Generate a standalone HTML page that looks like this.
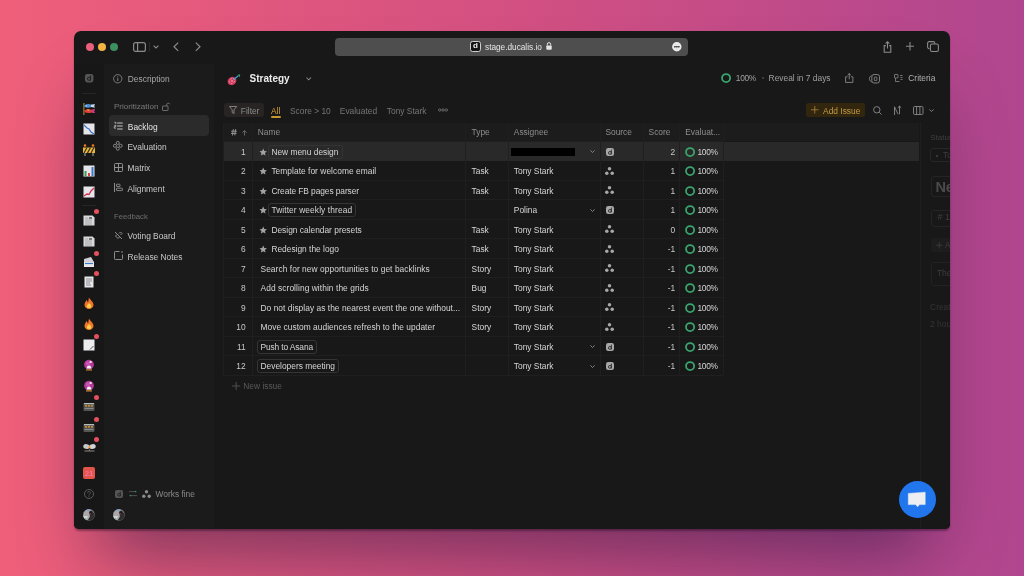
<!DOCTYPE html>
<html><head><meta charset="utf-8">
<style>
*{margin:0;padding:0;box-sizing:border-box}
html,body{width:1024px;height:576px;overflow:hidden}
body{position:relative;background:linear-gradient(90deg,#ef5f7a 0%,#d35082 50%,#b0468f 100%);font-family:"Liberation Sans",sans-serif;color:#d8d8d8}
.win{position:absolute;left:74px;top:31px;width:876px;height:498.4px;background:#181818;border-radius:7px 7px 5px 5px;overflow:hidden;box-shadow:0 2px 2px rgba(10,0,20,.35),0 48px 70px -22px rgba(0,10,50,.45)}
.a{position:absolute}
.t{position:absolute;font-size:8.4px;line-height:12px;white-space:nowrap}
.win{will-change:transform}
svg{position:absolute;overflow:visible}
.rail{position:absolute;left:0;top:33px;width:30px;height:465px;background:#171717}
.side{position:absolute;left:30px;top:33px;width:110px;height:465px;background:#1b1b1b}
.rpanel{position:absolute;left:846px;top:91px;width:30px;height:407px;background:#181818;border-left:1px solid #1f1f1f}
.dot{position:absolute;left:20.4px;width:5px;height:5px;border-radius:50%;background:#e4505c}
</style></head><body>

<div class="win">
  <!-- title bar -->
  <div class="a" style="left:11.7px;top:11.9px;width:8px;height:8px;border-radius:50%;background:#ec5f7a"></div>
  <div class="a" style="left:23.8px;top:11.9px;width:8px;height:8px;border-radius:50%;background:#f2b544"></div>
  <div class="a" style="left:36px;top:11.9px;width:8px;height:8px;border-radius:50%;background:#3e8f60"></div>
  <svg style="left:59px;top:11px" width="13" height="10" viewBox="0 0 13 10"><rect x=".6" y=".6" width="11.8" height="8.8" rx="2" fill="none" stroke="#8a8a8a" stroke-width="1.2"/><line x1="4.6" y1="1" x2="4.6" y2="9" stroke="#8a8a8a" stroke-width="1.2"/></svg>
  <div class="a" style="left:75px;top:11px;width:1px;height:10px;background:#2a2a2a"></div>
  <svg style="left:78.8px;top:14.3px" width="6" height="3.5" viewBox="0 0 6 3.5"><path d="M.6 .6 3 2.9 5.4 .6" fill="none" stroke="#8a8a8a" stroke-width="1.1"/></svg>
  <svg style="left:99px;top:10.7px" width="6" height="9.5" viewBox="0 0 6 9.5"><path d="M5.2 .6 1 4.75 5.2 8.9" fill="none" stroke="#8a8a8a" stroke-width="1.2"/></svg>
  <svg style="left:121px;top:10.7px" width="6" height="9.5" viewBox="0 0 6 9.5"><path d="M.8 .6 5 4.75 .8 8.9" fill="none" stroke="#8a8a8a" stroke-width="1.2"/></svg>
  <div class="a" style="left:260.5px;top:7px;width:353.5px;height:17.5px;border-radius:4px;background:#4e4e4e"></div>
  <div class="a" style="left:396px;top:10px;width:11px;height:11px;border-radius:2.5px;background:#151515;border:1px solid #d0d0d0"></div>
  <div class="t" style="left:399px;top:9px;color:#eee;font-weight:700;font-size:8px">d</div>
  <div class="t" style="left:411px;top:10.7px;color:#e6e6e6;font-size:8.25px">stage.ducalis.io</div>
  <svg style="left:472px;top:11px" width="6" height="8" viewBox="0 0 6 8"><path d="M1.3 3.5V2.3a1.7 1.7 0 0 1 3.4 0v1.2" fill="none" stroke="#e6e6e6" stroke-width="1"/><rect x=".3" y="3.4" width="5.4" height="4.4" rx=".8" fill="#e6e6e6"/></svg>
  <svg style="left:598.2px;top:10.7px" width="9.6" height="9.6" viewBox="0 0 10 10"><circle cx="5" cy="5" r="4.9" fill="#ececec"/><path d="M2 5h6" stroke="#555" stroke-width="1.1"/><circle cx="3" cy="5" r=".8" fill="#444"/><circle cx="5" cy="5" r=".8" fill="#444"/><circle cx="7" cy="5" r=".8" fill="#444"/><path d="M3.5 2.8h.5M5.7 2.8h.5M4.5 7.2l1 .6" stroke="#aaa" stroke-width=".6"/></svg>
  <svg style="left:809px;top:9.5px" width="9" height="12" viewBox="0 0 9 12"><path d="M2.8 4.6H1.2v6.6h6.6V4.6H6.2M4.5 7.5V.8M2.6 2.6 4.5.7l1.9 1.9" fill="none" stroke="#8a8a8a" stroke-width="1.1"/></svg>
  <svg style="left:832px;top:11.3px" width="8" height="8.5" viewBox="0 0 8 8.5"><path d="M4 0v8.5M0 4.25h8" fill="none" stroke="#8a8a8a" stroke-width="1.1"/></svg>
  <svg style="left:853px;top:10px" width="12" height="11" viewBox="0 0 12 11"><rect x="3.4" y="3" width="8" height="7.5" rx="1.6" fill="none" stroke="#8a8a8a" stroke-width="1.1"/><path d="M2.5 7.6H2.3A1.6 1.6 0 0 1 .6 6V2.2A1.6 1.6 0 0 1 2.2.6h4A1.6 1.6 0 0 1 7.8 2.2v.6" fill="none" stroke="#8a8a8a" stroke-width="1.1"/></svg>


  <div class="rail">
    <svg style="left:10.9px;top:9.9px" width="8.4" height="8.4" viewBox="0 0 8 8"><rect width="8" height="8" rx="2.2" fill="#565656"/><path d="M5.3 1.5v4.9M5.3 4.6A1.45 1.45 0 1 1 5.2 4" fill="none" stroke="#222" stroke-width="1"/></svg>
    <div class="a" style="left:8px;top:29px;width:14px;height:1px;background:#262626"></div>
    <!-- 1 carp flag -->
    <svg style="left:9px;top:38.5px" width="12.5" height="12" viewBox="0 0 12.5 12"><rect x="0.4" y="0" width="1" height="12" fill="#b8943a"/><path d="M1.4 2.2Q5 .2 8.5 1.8L12 1.2 11 3 12 4.6 8.5 4Q5 5.6 1.4 3.8z" fill="#4a90d8"/><path d="M8 1.8 12 1.2 11 3 12 4.6 8 4z" fill="#d8d8dc"/><circle cx="3.2" cy="2.9" r=".6" fill="#fff"/><path d="M1.4 7.4Q5 5.2 8.5 6.8L12 6.2 11 8.2 12 10 8.5 9.4Q5 11 1.4 9z" fill="#e0403a"/><path d="M3 6.8Q5 6 6.5 6.6L6 8z" fill="#f0a030"/><path d="M8.4 6.8 12 6.2 11 8.2 12 10 8.4 9.4z" fill="#c8388a"/></svg>
    <!-- 2 chart down -->
    <svg style="left:9px;top:59px" width="12" height="12" viewBox="0 0 12 12"><rect x="0.5" y="0.5" width="11" height="11" fill="#e6e6ea"/><path d="M1 2 4 5 6 6 8 9 11 11" fill="none" stroke="#3b78c8" stroke-width="1.3"/></svg>
    <!-- 3 construction -->
    <svg style="left:9px;top:80px" width="12" height="12" viewBox="0 0 12 12"><circle cx="2" cy="1.5" r="1.3" fill="#f07a20"/><circle cx="10" cy="1.5" r="1.3" fill="#f07a20"/><rect x="0" y="3.5" width="12" height="5.5" fill="#f0b830"/><path d="M1 9 4 3.5M4.5 9 7.5 3.5M8 9 11 3.5" stroke="#333" stroke-width="1.3"/><rect x="1.5" y="9" width="1" height="3" fill="#aaa"/><rect x="9.5" y="9" width="1" height="3" fill="#aaa"/></svg>
    <!-- 4 bar chart -->
    <svg style="left:9px;top:101px" width="12" height="12" viewBox="0 0 12 12"><rect x="0.5" y="0.5" width="11" height="11" fill="#e6e6ea"/><rect x="1.5" y="6" width="2" height="5" fill="#3aa050"/><rect x="5" y="8" width="2" height="3" fill="#d84040"/><rect x="8.5" y="2" width="2" height="9" fill="#3b78c8"/></svg>
    <!-- 5 chart up -->
    <svg style="left:9px;top:122px" width="12" height="12" viewBox="0 0 12 12"><rect x="0.5" y="0.5" width="11" height="11" fill="#e6e6ea"/><path d="M1 10 4 8 6 8.5 8 5 11 2" fill="none" stroke="#d03048" stroke-width="1.3"/></svg>
    <div class="a" style="left:8px;top:141px;width:14px;height:1px;background:#262626"></div>
    <!-- 6 newspaper -->
    <div class="dot" style="top:145px"></div>
    <svg style="left:9px;top:150px" width="12" height="12" viewBox="0 0 12 12"><path d="M.5 1.5h9l2 2v8h-11z" fill="#d9d9dc"/><path d="M2 4h3M2 6h7M2 8h7M2 10h7" stroke="#999" stroke-width=".8"/><rect x="6" y="3" width="3" height="2" fill="#777"/></svg>
    <svg style="left:9px;top:171px" width="12" height="12" viewBox="0 0 12 12"><path d="M.5 1.5h9l2 2v8h-11z" fill="#d9d9dc"/><path d="M2 4h3M2 6h7M2 8h7M2 10h7" stroke="#999" stroke-width=".8"/><rect x="6" y="3" width="3" height="2" fill="#777"/></svg>
    <!-- 8 envelope -->
    <div class="dot" style="top:186.5px"></div>
    <svg style="left:9px;top:192px" width="12" height="12" viewBox="0 0 12 12"><path d="M1 3 8 1l3 5v5H1z" fill="#d0d0d4"/><path d="M1 6h10v5H1z" fill="#e8e8ec"/><path d="M2 7.5h8" stroke="#3b78c8" stroke-width="1.2"/></svg>
    <!-- 9 receipt -->
    <div class="dot" style="top:206.5px"></div>
    <svg style="left:10px;top:212px" width="10" height="12" viewBox="0 0 10 12"><rect x=".5" y=".5" width="9" height="11" fill="#e6e6ea"/><path d="M2 3h6M2 5h6M2 7h4M2 9h5" stroke="#777" stroke-width=".8"/></svg>
    <!-- 10 fire -->
    <svg style="left:9px;top:233px" width="12" height="12" viewBox="0 0 12 12"><path d="M6 .5C7 3 10.5 4.5 10.5 8A4.5 4 0 0 1 1.5 8C1.5 5.5 3 4.5 3.5 3 4.5 4 4.5 5 5 5.5 5.5 4 5.5 2 6 .5z" fill="#f2762a"/><path d="M6 6c.8 1 2.2 1.6 2.2 3.2A2.2 2 0 0 1 3.8 9.2C3.8 7.8 5.5 7 6 6z" fill="#fbd04a"/></svg>
    <svg style="left:9px;top:254px" width="12" height="12" viewBox="0 0 12 12"><path d="M6 .5C7 3 10.5 4.5 10.5 8A4.5 4 0 0 1 1.5 8C1.5 5.5 3 4.5 3.5 3 4.5 4 4.5 5 5 5.5 5.5 4 5.5 2 6 .5z" fill="#f2762a"/><path d="M6 6c.8 1 2.2 1.6 2.2 3.2A2.2 2 0 0 1 3.8 9.2C3.8 7.8 5.5 7 6 6z" fill="#fbd04a"/></svg>
    <!-- 12 memo -->
    <div class="dot" style="top:269.5px"></div>
    <svg style="left:9px;top:274.5px" width="12" height="12" viewBox="0 0 12 12"><rect x=".5" y=".5" width="11" height="11" fill="#ececef"/><path d="M7 10.5 10.5 7" stroke="#555" stroke-width="1"/></svg>
    <!-- 13,14 crystal ball -->
    <svg style="left:9px;top:295px" width="12" height="12" viewBox="0 0 12 12"><circle cx="6" cy="5.6" r="4.9" fill="#b33a9c"/><circle cx="4.8" cy="4.5" r="2" fill="#cc55b0"/><rect x="6.6" y="2" width="2" height="2" fill="#f0e0f0"/><path d="M3.6 9.4Q3.8 6.4 6 6.4T8.4 9.4z" fill="#f4f0f4"/><rect x="3" y="10.3" width="6" height="1.2" fill="#d08a30"/></svg>
    <svg style="left:9px;top:316px" width="12" height="12" viewBox="0 0 12 12"><circle cx="6" cy="5.6" r="4.9" fill="#b33a9c"/><circle cx="4.8" cy="4.5" r="2" fill="#cc55b0"/><rect x="6.6" y="2" width="2" height="2" fill="#f0e0f0"/><path d="M3.6 9.4Q3.8 6.4 6 6.4T8.4 9.4z" fill="#f4f0f4"/><rect x="3" y="10.3" width="6" height="1.2" fill="#d08a30"/></svg>
    <!-- 15,16 keyboard -->
    <div class="dot" style="top:331px"></div>
    <svg style="left:9px;top:337.5px" width="12" height="10" viewBox="0 0 12 10"><rect x=".5" y="1" width="11" height="8" rx="1" fill="#555"/><rect x="1" y="1" width="10" height="1.2" fill="#bbb"/><path d="M2 3.8h2M5 3.8h2M8 3.8h2" stroke="#e8a020" stroke-width="1.2"/><path d="M1.5 6.5h9" stroke="#888" stroke-width="1"/></svg>
    <div class="dot" style="top:352.5px"></div>
    <svg style="left:9px;top:359px" width="12" height="10" viewBox="0 0 12 10"><rect x=".5" y="1" width="11" height="8" rx="1" fill="#555"/><rect x="1" y="1" width="10" height="1.2" fill="#bbb"/><path d="M2 3.8h2M5 3.8h2M8 3.8h2" stroke="#e8a020" stroke-width="1.2"/><path d="M1.5 6.5h9" stroke="#888" stroke-width="1"/></svg>
    <!-- 17 wings -->
    <div class="dot" style="top:372.5px"></div>
    <svg style="left:8.5px;top:378px" width="13" height="10" viewBox="0 0 13 10"><ellipse cx="3.5" cy="4.5" rx="3.3" ry="2.4" transform="rotate(15 3.5 4.5)" fill="#c8c8cc"/><ellipse cx="9.5" cy="4.5" rx="3.3" ry="2.4" transform="rotate(-15 9.5 4.5)" fill="#d4d4d8"/><circle cx="6.5" cy="5.2" r="1.1" fill="#e8a020"/><path d="M1.5 9h10" stroke="#8a8a8a" stroke-width="1"/><circle cx="6.5" cy="8" r=".7" fill="#c89020"/></svg>
    <!-- calendar -->
    <div class="a" style="left:9px;top:403px;width:12px;height:12px;border-radius:2px;background:#e3554a"></div>
    <div class="t" style="left:9px;width:12px;text-align:center;top:403.5px;font-size:8px;color:#f3709a;font-weight:700;letter-spacing:-.1px">21</div>
    <!-- help -->
    <svg style="left:10px;top:425px" width="10" height="10" viewBox="0 0 10 10"><circle cx="5" cy="5" r="4.5" fill="none" stroke="#5a5a5a" stroke-width="1"/><path d="M3.6 3.9a1.4 1.4 0 1 1 2 1.3c-.4.2-.6.5-.6.9v.3" fill="none" stroke="#5a5a5a" stroke-width=".9"/><circle cx="5" cy="7.5" r=".5" fill="#5a5a5a"/></svg>
    <!-- avatar -->
    <svg style="left:9.1px;top:445.1px" width="11.8" height="11.8" viewBox="0 0 12 12"><clipPath id="c1"><circle cx="6" cy="6" r="5.9"/></clipPath><g clip-path="url(#c1)"><rect width="12" height="12" fill="#a8a8a8"/><path d="M0 6.5Q3 8 5.5 7L2 12H0z" fill="#d8d8d8"/><path d="M6.5 2 9 1.5 12 5v7H4.5L7 8z" fill="#2e2e2e"/><path d="M6.3 3.2 8.6 2.6 9 4.5 6.8 5.3z" fill="#111"/><circle cx="7.3" cy="4.6" r=".8" fill="#b03070"/><ellipse cx="5.3" cy=".9" rx="1.2" ry=".8" fill="#5aa0e8"/><circle cx="2.3" cy="9.8" r=".7" fill="#2fa060"/></g></svg>
  </div>

  <div class="side">
    <svg style="left:9.3px;top:9.5px" width="9.5" height="9.5" viewBox="0 0 10 10"><circle cx="5" cy="5" r="4.4" fill="none" stroke="#7c7c7c" stroke-width="1"/><path d="M5 4.3v3" stroke="#8a8a8a" stroke-width="1"/><circle cx="5" cy="2.9" r=".6" fill="#8a8a8a"/></svg>
    <div class="t" style="left:23.8px;top:9.30px;color:#a6a6a6;">Description</div>
    <div class="t" style="left:9.9px;top:36.80px;color:#7a7a7a;font-size:8.1px">Prioritization</div>
    <svg style="left:58px;top:38.3px" width="8" height="9" viewBox="0 0 8 9"><rect x=".5" y="4" width="5.5" height="4.5" rx=".6" fill="none" stroke="#777" stroke-width=".9"/><path d="M4.8 4V2.2a1.6 1.6 0 0 1 3 0" fill="none" stroke="#777" stroke-width=".9"/></svg>
    <div class="a" style="left:5.3px;top:51.2px;width:99.5px;height:20.4px;border-radius:4px;background:#2b2b2b"></div>
    <svg style="left:9.9px;top:57.5px" width="9" height="8" viewBox="0 0 9 8"><path d="M3.2 1h5.5M3.2 4h5.5M3.2 7h5.5" stroke="#c8c8c8" stroke-width="1"/><path d="M.4 .3h1.4v1.6M.3 3.3h1.5v1.4H.3v1.5h1.5" fill="none" stroke="#c8c8c8" stroke-width=".8"/></svg>
    <div class="t" style="left:23.8px;top:56.60px;color:#e4e4e4;">Backlog</div>
    <svg style="left:9.2px;top:77.3px" width="9.6" height="9.6" viewBox="0 0 10 10"><circle cx="5" cy="2" r="1.6" fill="none" stroke="#9a9a9a" stroke-width=".85"/><circle cx="5" cy="8" r="1.6" fill="none" stroke="#9a9a9a" stroke-width=".85"/><circle cx="2" cy="5" r="1.6" fill="none" stroke="#9a9a9a" stroke-width=".85"/><circle cx="8" cy="5" r="1.6" fill="none" stroke="#9a9a9a" stroke-width=".85"/></svg>
    <div class="t" style="left:23.5px;top:76.90px;color:#c8c8c8;">Evaluation</div>
    <svg style="left:9.5px;top:98.5px" width="9" height="9" viewBox="0 0 9 9"><rect x=".5" y=".5" width="8" height="8" rx="1" fill="none" stroke="#9a9a9a" stroke-width=".9"/><path d="M4.5.5v8M.5 4.5h8" stroke="#9a9a9a" stroke-width=".9"/></svg>
    <div class="t" style="left:23.5px;top:97.90px;color:#c8c8c8;">Matrix</div>
    <svg style="left:9.5px;top:119px" width="9" height="9" viewBox="0 0 9 9"><path d="M.5 0v9" stroke="#9a9a9a" stroke-width=".9"/><rect x="2.4" y="1.2" width="3.6" height="2.4" rx=".6" fill="none" stroke="#9a9a9a" stroke-width=".85"/><rect x="2.4" y="5.2" width="6" height="2.4" rx=".6" fill="none" stroke="#9a9a9a" stroke-width=".85"/></svg>
    <div class="t" style="left:23.5px;top:118.60px;color:#c8c8c8;">Alignment</div>
    <div class="t" style="left:10.0px;top:146.80px;color:#6e6e6e;font-size:7.7px">Feedback</div>
    <svg style="left:9.5px;top:166.5px" width="9" height="9" viewBox="0 0 9 9"><path d="M1 1l7 7M3 3.5 1.5 5l2.5 2.5L5.5 6M5 2.5 6.5 1l1.5 1.5L6.5 4" fill="none" stroke="#9a9a9a" stroke-width=".9"/></svg>
    <div class="t" style="left:23.5px;top:166.00px;color:#c8c8c8;">Voting Board</div>
    <svg style="left:9.5px;top:187px" width="9" height="9" viewBox="0 0 9 9"><path d="M5.5.5H1.3a.8.8 0 0 0-.8.8v6.4a.8.8 0 0 0 .8.8h6.4a.8.8 0 0 0 .8-.8V3.5" fill="none" stroke="#9a9a9a" stroke-width=".9"/><circle cx="8" cy="1" r=".8" fill="#9a9a9a"/></svg>
    <div class="t" style="left:23.5px;top:186.60px;color:#c8c8c8;">Release Notes</div>
    <svg style="left:10.9px;top:425.9px" width="8" height="8" viewBox="0 0 8 8"><rect x="0" y="0" width="8" height="8" rx="2" fill="#555"/><path d="M5.3 1.6v4.6M5.3 4.9A1.3 1.3 0 1 1 5.2 4.3" fill="none" stroke="#222" stroke-width=".9"/></svg>
    <svg style="left:25px;top:426.5px" width="8" height="5" viewBox="0 0 8 5"><path d="M0 .6h7.5M.5 4.6H8" stroke="#555" stroke-width=".9"/><circle cx="6.4" cy=".6" r=".8" fill="#2a9058"/><circle cx="1.5" cy="4.6" r=".8" fill="#2a9058"/></svg>
    <svg style="left:38px;top:425.5px" width="9" height="8" viewBox="0 0 9 8"><circle cx="4.5" cy="1.8" r="1.7" fill="#8a8a8a"/><circle cx="1.8" cy="6.2" r="1.7" fill="#8a8a8a"/><circle cx="7.2" cy="6.2" r="1.7" fill="#8a8a8a"/></svg>
    <div class="t" style="left:51.5px;top:424.30px;color:#8a8a8a;">Works fine</div>
    <svg style="left:9.4px;top:445.1px" width="11.8" height="11.8" viewBox="0 0 12 12"><clipPath id="c2"><circle cx="6" cy="6" r="5.9"/></clipPath><g clip-path="url(#c2)"><rect width="12" height="12" fill="#a8a8a8"/><path d="M0 6.5Q3 8 5.5 7L2 12H0z" fill="#d8d8d8"/><path d="M6.5 2 9 1.5 12 5v7H4.5L7 8z" fill="#2e2e2e"/><path d="M6.3 3.2 8.6 2.6 9 4.5 6.8 5.3z" fill="#111"/><circle cx="7.3" cy="4.6" r=".8" fill="#b03070"/><ellipse cx="5.3" cy=".9" rx="1.2" ry=".8" fill="#5aa0e8"/><circle cx="2.3" cy="9.8" r=".7" fill="#2fa060"/></g></svg>
  </div>
  <!--MAIN-->
  <svg style="left:152.80px;top:42.80px" width="14" height="11.5" viewBox="0 0 14 11.5"><ellipse cx="5" cy="7" rx="4.6" ry="3.9" transform="rotate(-35 5 7)" fill="#d43c5e"/><ellipse cx="5" cy="7" rx="2.9" ry="2.3" transform="rotate(-35 5 7)" fill="none" stroke="#f4b8c8" stroke-width=".7" stroke-dasharray=".9 .9"/><circle cx="5" cy="7" r=".8" fill="#f4b8c8"/><path d="M6.3 5.7 11.3 1.8" stroke="#4a9ad0" stroke-width="1.2"/><path d="M10.6 .6 13.2 .4 12.8 3.2z" fill="#3aa070"/></svg>
  <div class="t" style="left:175.60px;top:41.83px;color:#ececec;font-size:10.0px;font-weight:700">Strategy</div>
  <svg style="left:232.20px;top:45.50px" width="5.5" height="3.3" viewBox="0 0 5.5 3.3"><path d="M.5 .5 2.75 2.8 5 .5" fill="none" stroke="#8a8a8a" stroke-width="1.05"/></svg>
  <svg style="left:647.00px;top:42.00px" width="10.2" height="10.2" viewBox="0 0 10.2 10.2"><circle cx="5.1" cy="5.1" r="4.05" fill="none" stroke="#3aa46e" stroke-width="1.8"/></svg>
  <div class="t" style="left:661.80px;top:40.89px;color:#a0a0a0;font-size:8.4px;letter-spacing:-.3px">100%</div>
  <div class="a" style="left:688.00px;top:46.30px;width:1.50px;height:1.50px;border-radius:50%;background:#444"></div>
  <div class="t" style="left:694.60px;top:40.89px;color:#a0a0a0;font-size:8.4px;">Reveal in 7 days</div>
  <svg style="left:771.00px;top:41.60px" width="8.5" height="10" viewBox="0 0 8.5 10"><path d="M2.5 3.8H.6v5.6h7.3V3.8H6M4.25 6.3V.6M2.6 2.2 4.25.6 5.9 2.2" fill="none" stroke="#8a8a8a" stroke-width=".9"/></svg>
  <svg style="left:795.30px;top:42.80px" width="11" height="9.5" viewBox="0 0 11 9.5"><rect x="2.8" y=".5" width="7.7" height="8.5" rx="2.2" fill="none" stroke="#8a8a8a" stroke-width=".9"/><rect x="5.3" y="3" width="2.6" height="3.6" rx=".6" fill="none" stroke="#8a8a8a" stroke-width=".8"/><path d="M2.6 1.6C1 2.2.5 3.2.5 4.7s.6 2.6 2.2 3.2" fill="none" stroke="#8a8a8a" stroke-width=".9"/></svg>
  <svg style="left:820.20px;top:43.00px" width="9" height="9" viewBox="0 0 9 9"><rect x=".5" y=".5" width="3.5" height="3.5" rx=".5" fill="none" stroke="#8a8a8a" stroke-width=".8"/><path d="M1.5 4v3.5h4M6 1.5h2.5M6.5 3.5h2M6.5 5.5h2" fill="none" stroke="#8a8a8a" stroke-width=".8"/></svg>
  <div class="t" style="left:834.30px;top:40.89px;color:#b0b0b0;font-size:8.4px;">Criteria</div>
  <div class="a" style="left:149.80px;top:72.00px;width:40.40px;height:14.00px;border-radius:3px;background:#282424"></div>
  <svg style="left:154.50px;top:75.30px" width="8.2" height="8" viewBox="0 0 8.2 8"><path d="M.5.5h7.2L5 3.9v3.6L3.2 6.6V3.9z" fill="none" stroke="#8a8a8a" stroke-width=".9" stroke-linejoin="round"/></svg>
  <div class="t" style="left:166.80px;top:73.69px;color:#8c8c8c;font-size:8.4px;">Filter</div>
  <div class="t" style="left:197.00px;top:73.69px;color:#d4a237;font-size:8.4px;">All</div>
  <div class="a" style="left:197.00px;top:84.50px;width:9.50px;height:2.00px;border-radius:1px;background:#c8962e"></div>
  <div class="t" style="left:216.00px;top:73.69px;color:#767676;font-size:8.4px;">Score &gt; 10</div>
  <div class="t" style="left:265.80px;top:73.69px;color:#767676;font-size:8.4px;">Evaluated</div>
  <div class="t" style="left:312.80px;top:73.69px;color:#767676;font-size:8.4px;">Tony Stark</div>
  <svg style="left:364.20px;top:77.30px" width="10" height="4" viewBox="0 0 10 4"><circle cx="1.7" cy="2" r="1.2" fill="none" stroke="#777" stroke-width=".8"/><circle cx="5" cy="2" r="1.2" fill="none" stroke="#777" stroke-width=".8"/><circle cx="8.3" cy="2" r="1.2" fill="none" stroke="#777" stroke-width=".8"/></svg>
  <div class="a" style="left:732.20px;top:72.10px;width:58.50px;height:14.00px;border-radius:2.5px;background:#33260e"></div>
  <svg style="left:737.40px;top:75.30px" width="7.5" height="7.5" viewBox="0 0 7.5 7.5"><path d="M3.75 0v7.5M0 3.75h7.5" stroke="#a8853c" stroke-width=".8"/></svg>
  <div class="t" style="left:749.10px;top:73.69px;color:#c49c48;font-size:8.4px;">Add Issue</div>
  <svg style="left:799.00px;top:75.00px" width="9" height="9" viewBox="0 0 9 9"><circle cx="3.8" cy="3.8" r="3.2" fill="none" stroke="#8a8a8a" stroke-width=".9"/><path d="M6.2 6.2 8.6 8.6" stroke="#8a8a8a" stroke-width=".9"/></svg>
  <svg style="left:819.00px;top:75.00px" width="8" height="9" viewBox="0 0 8 9"><path d="M1.5 9V.8L5 8.2M6.5 0v8.2M4.8 1.8 6.5.2 8.2 1.8" fill="none" stroke="#8a8a8a" stroke-width=".9"/></svg>
  <svg style="left:838.80px;top:75.00px" width="10.5" height="9" viewBox="0 0 10.5 9"><rect x=".5" y=".5" width="9.5" height="8" rx="1.2" fill="none" stroke="#8a8a8a" stroke-width=".9"/><path d="M3.6.5v8M6.9.5v8" stroke="#8a8a8a" stroke-width=".9"/></svg>
  <svg style="left:855.00px;top:78.00px" width="5" height="3" viewBox="0 0 5 3"><path d="M.4 .4 2.5 2.5 4.6 .4" fill="none" stroke="#8a8a8a" stroke-width=".9"/></svg>
  <div class="a" style="left:149.50px;top:91.50px;width:695.40px;height:18.50px;background:#1c1c1c"></div>
  <div class="a" style="left:149.50px;top:109.90px;width:499.50px;height:1.00px;background:#1f1f1f"></div>
  <div class="a" style="left:149.50px;top:129.39px;width:499.50px;height:1.00px;background:#1f1f1f"></div>
  <div class="a" style="left:149.50px;top:148.88px;width:499.50px;height:1.00px;background:#1f1f1f"></div>
  <div class="a" style="left:149.50px;top:168.37px;width:499.50px;height:1.00px;background:#1f1f1f"></div>
  <div class="a" style="left:149.50px;top:187.86px;width:499.50px;height:1.00px;background:#1f1f1f"></div>
  <div class="a" style="left:149.50px;top:207.35px;width:499.50px;height:1.00px;background:#1f1f1f"></div>
  <div class="a" style="left:149.50px;top:226.84px;width:499.50px;height:1.00px;background:#1f1f1f"></div>
  <div class="a" style="left:149.50px;top:246.33px;width:499.50px;height:1.00px;background:#1f1f1f"></div>
  <div class="a" style="left:149.50px;top:265.82px;width:499.50px;height:1.00px;background:#1f1f1f"></div>
  <div class="a" style="left:149.50px;top:285.31px;width:499.50px;height:1.00px;background:#1f1f1f"></div>
  <div class="a" style="left:149.50px;top:304.80px;width:499.50px;height:1.00px;background:#1f1f1f"></div>
  <div class="a" style="left:149.50px;top:324.29px;width:499.50px;height:1.00px;background:#1f1f1f"></div>
  <div class="a" style="left:149.50px;top:343.78px;width:499.50px;height:1.00px;background:#1f1f1f"></div>
  <div class="a" style="left:149.50px;top:111.00px;width:695.40px;height:19.19px;background:#292929"></div>
  <div class="a" style="left:149.00px;top:91.50px;width:1.00px;height:252.78px;background:#1f1f1f"></div>
  <div class="a" style="left:178.10px;top:91.50px;width:1.00px;height:252.78px;background:#1f1f1f"></div>
  <div class="a" style="left:391.10px;top:91.50px;width:1.00px;height:252.78px;background:#1f1f1f"></div>
  <div class="a" style="left:434.10px;top:91.50px;width:1.00px;height:252.78px;background:#1f1f1f"></div>
  <div class="a" style="left:525.90px;top:91.50px;width:1.00px;height:252.78px;background:#1f1f1f"></div>
  <div class="a" style="left:569.00px;top:91.50px;width:1.00px;height:252.78px;background:#1f1f1f"></div>
  <div class="a" style="left:605.10px;top:91.50px;width:1.00px;height:252.78px;background:#1f1f1f"></div>
  <div class="a" style="left:648.50px;top:91.50px;width:1.00px;height:252.78px;background:#1f1f1f"></div>
  <svg style="left:156.50px;top:98.10px" width="6" height="6.6" viewBox="0 0 6 6.6"><path d="M2.3.2 1.5 6.4M4.6.2 3.8 6.4M.2 2.2h5.6M0 4.4h5.5" fill="none" stroke="#9a9a9a" stroke-width=".95"/></svg>
  <svg style="left:168.00px;top:98.50px" width="5" height="5.6" viewBox="0 0 5 5.6"><path d="M2.5 5.6V.7M.4 2.7 2.5.6 4.6 2.7" fill="none" stroke="#6e6e6e" stroke-width=".9"/></svg>
  <div class="t" style="left:183.80px;top:95.49px;color:#8e8e8e;font-size:8.4px;">Name</div>
  <div class="t" style="left:397.60px;top:95.49px;color:#8e8e8e;font-size:8.4px;">Type</div>
  <div class="t" style="left:439.80px;top:95.49px;color:#8e8e8e;font-size:8.4px;">Assignee</div>
  <div class="t" style="left:531.40px;top:95.49px;color:#8e8e8e;font-size:8.4px;">Source</div>
  <div class="t" style="left:574.60px;top:95.49px;color:#8e8e8e;font-size:8.4px;">Score</div>
  <div class="t" style="left:611.20px;top:95.49px;color:#8e8e8e;font-size:8.4px;">Evaluat...</div>
  <div class="t" style="left:71.60px;width:100px;text-align:right;top:114.99px;color:#c8c8c8;font-size:8.4px;">1</div>
  <svg style="left:185.20px;top:116.70px" width="8.4" height="8.4" viewBox="0 0 24 24"><path d="M12 1.5l3.2 6.9 7.5.9-5.6 5.1 1.5 7.4L12 18.1l-6.6 3.7 1.5-7.4L1.3 9.3l7.5-.9z" fill="#a2a2a2"/></svg>
  <div class="a tagbox" style="left:194.00px;top:114.00px;height:14px;border:1px solid #343434;border-radius:3px;padding:0 2.6px 0 3px;font-size:8.4px;line-height:12px;color:transparent;white-space:nowrap;letter-spacing:0px">New menu design</div>
  <div class="t" style="left:197.40px;top:114.99px;color:#d6d6d6;font-size:8.4px;letter-spacing:0px">New menu design</div>
  <div class="a" style="left:436.70px;top:116.90px;width:64.00px;height:8.00px;background:#000"></div>
  <svg style="left:515.80px;top:119.20px" width="5" height="3" viewBox="0 0 5 3"><path d="M.4 .4 2.5 2.5 4.6 .4" fill="none" stroke="#8a8a8a" stroke-width=".9"/></svg>
  <div class="a" style="left:532.00px;top:116.80px;width:8.20px;height:8.20px;border-radius:2.2px;background:#a8a8a8"></div>
  <svg style="left:532.00px;top:116.80px" width="8.2" height="8.2" viewBox="0 0 8.2 8.2"><path d="M5.4 1.6v4.9" stroke="#2a2a2a" stroke-width=".9"/><circle cx="3.9" cy="4.9" r="1.45" fill="none" stroke="#2a2a2a" stroke-width=".9"/></svg>
  <div class="t" style="left:501.20px;width:100px;text-align:right;top:114.99px;color:#c8c8c8;font-size:8.4px;">2</div>
  <svg style="left:610.90px;top:116.00px" width="10.2" height="10.2" viewBox="0 0 10.2 10.2"><circle cx="5.1" cy="5.1" r="4.05" fill="none" stroke="#3aa46e" stroke-width="1.8"/></svg>
  <div class="t" style="left:623.50px;top:114.99px;color:#d6d6d6;font-size:8.4px;letter-spacing:-.3px">100%</div>
  <div class="t" style="left:71.60px;width:100px;text-align:right;top:134.48px;color:#c8c8c8;font-size:8.4px;">2</div>
  <svg style="left:185.20px;top:136.19px" width="8.4" height="8.4" viewBox="0 0 24 24"><path d="M12 1.5l3.2 6.9 7.5.9-5.6 5.1 1.5 7.4L12 18.1l-6.6 3.7 1.5-7.4L1.3 9.3l7.5-.9z" fill="#a2a2a2"/></svg>
  <div class="t" style="left:197.40px;top:134.48px;color:#d6d6d6;font-size:8.4px;letter-spacing:0.04px">Template for welcome email</div>
  <div class="t" style="left:397.60px;top:134.48px;color:#d6d6d6;font-size:8.4px;">Task</div>
  <div class="t" style="left:439.80px;top:134.48px;color:#d6d6d6;font-size:8.4px;">Tony Stark</div>
  <svg style="left:531.30px;top:135.99px" width="9" height="8" viewBox="0 0 9 8"><circle cx="4.5" cy="1.8" r="1.75" fill="#a8a8a8"/><circle cx="1.8" cy="6.2" r="1.75" fill="#a8a8a8"/><circle cx="7.2" cy="6.2" r="1.75" fill="#a8a8a8"/></svg>
  <div class="t" style="left:501.20px;width:100px;text-align:right;top:134.48px;color:#c8c8c8;font-size:8.4px;">1</div>
  <svg style="left:610.90px;top:135.49px" width="10.2" height="10.2" viewBox="0 0 10.2 10.2"><circle cx="5.1" cy="5.1" r="4.05" fill="none" stroke="#3aa46e" stroke-width="1.8"/></svg>
  <div class="t" style="left:623.50px;top:134.48px;color:#d6d6d6;font-size:8.4px;letter-spacing:-.3px">100%</div>
  <div class="t" style="left:71.60px;width:100px;text-align:right;top:153.97px;color:#c8c8c8;font-size:8.4px;">3</div>
  <svg style="left:185.20px;top:155.68px" width="8.4" height="8.4" viewBox="0 0 24 24"><path d="M12 1.5l3.2 6.9 7.5.9-5.6 5.1 1.5 7.4L12 18.1l-6.6 3.7 1.5-7.4L1.3 9.3l7.5-.9z" fill="#a2a2a2"/></svg>
  <div class="t" style="left:197.40px;top:153.97px;color:#d6d6d6;font-size:8.4px;letter-spacing:-0.08px">Create FB pages parser</div>
  <div class="t" style="left:397.60px;top:153.97px;color:#d6d6d6;font-size:8.4px;">Task</div>
  <div class="t" style="left:439.80px;top:153.97px;color:#d6d6d6;font-size:8.4px;">Tony Stark</div>
  <svg style="left:531.30px;top:155.48px" width="9" height="8" viewBox="0 0 9 8"><circle cx="4.5" cy="1.8" r="1.75" fill="#a8a8a8"/><circle cx="1.8" cy="6.2" r="1.75" fill="#a8a8a8"/><circle cx="7.2" cy="6.2" r="1.75" fill="#a8a8a8"/></svg>
  <div class="t" style="left:501.20px;width:100px;text-align:right;top:153.97px;color:#c8c8c8;font-size:8.4px;">1</div>
  <svg style="left:610.90px;top:154.98px" width="10.2" height="10.2" viewBox="0 0 10.2 10.2"><circle cx="5.1" cy="5.1" r="4.05" fill="none" stroke="#3aa46e" stroke-width="1.8"/></svg>
  <div class="t" style="left:623.50px;top:153.97px;color:#d6d6d6;font-size:8.4px;letter-spacing:-.3px">100%</div>
  <div class="t" style="left:71.60px;width:100px;text-align:right;top:173.46px;color:#c8c8c8;font-size:8.4px;">4</div>
  <svg style="left:185.20px;top:175.17px" width="8.4" height="8.4" viewBox="0 0 24 24"><path d="M12 1.5l3.2 6.9 7.5.9-5.6 5.1 1.5 7.4L12 18.1l-6.6 3.7 1.5-7.4L1.3 9.3l7.5-.9z" fill="#a2a2a2"/></svg>
  <div class="a tagbox" style="left:194.00px;top:172.47px;height:14px;border:1px solid #343434;border-radius:3px;padding:0 2.6px 0 3px;font-size:8.4px;line-height:12px;color:transparent;white-space:nowrap;letter-spacing:0.1px">Twitter weekly thread</div>
  <div class="t" style="left:197.40px;top:173.46px;color:#d6d6d6;font-size:8.4px;letter-spacing:0.1px">Twitter weekly thread</div>
  <div class="t" style="left:439.80px;top:173.46px;color:#d6d6d6;font-size:8.4px;">Polina</div>
  <svg style="left:515.80px;top:177.67px" width="5" height="3" viewBox="0 0 5 3"><path d="M.4 .4 2.5 2.5 4.6 .4" fill="none" stroke="#8a8a8a" stroke-width=".9"/></svg>
  <div class="a" style="left:532.00px;top:175.27px;width:8.20px;height:8.20px;border-radius:2.2px;background:#a8a8a8"></div>
  <svg style="left:532.00px;top:175.27px" width="8.2" height="8.2" viewBox="0 0 8.2 8.2"><path d="M5.4 1.6v4.9" stroke="#2a2a2a" stroke-width=".9"/><circle cx="3.9" cy="4.9" r="1.45" fill="none" stroke="#2a2a2a" stroke-width=".9"/></svg>
  <div class="t" style="left:501.20px;width:100px;text-align:right;top:173.46px;color:#c8c8c8;font-size:8.4px;">1</div>
  <svg style="left:610.90px;top:174.47px" width="10.2" height="10.2" viewBox="0 0 10.2 10.2"><circle cx="5.1" cy="5.1" r="4.05" fill="none" stroke="#3aa46e" stroke-width="1.8"/></svg>
  <div class="t" style="left:623.50px;top:173.46px;color:#d6d6d6;font-size:8.4px;letter-spacing:-.3px">100%</div>
  <div class="t" style="left:71.60px;width:100px;text-align:right;top:192.95px;color:#c8c8c8;font-size:8.4px;">5</div>
  <svg style="left:185.20px;top:194.66px" width="8.4" height="8.4" viewBox="0 0 24 24"><path d="M12 1.5l3.2 6.9 7.5.9-5.6 5.1 1.5 7.4L12 18.1l-6.6 3.7 1.5-7.4L1.3 9.3l7.5-.9z" fill="#a2a2a2"/></svg>
  <div class="t" style="left:197.40px;top:192.95px;color:#d6d6d6;font-size:8.4px;letter-spacing:0px">Design calendar presets</div>
  <div class="t" style="left:397.60px;top:192.95px;color:#d6d6d6;font-size:8.4px;">Task</div>
  <div class="t" style="left:439.80px;top:192.95px;color:#d6d6d6;font-size:8.4px;">Tony Stark</div>
  <svg style="left:531.30px;top:194.46px" width="9" height="8" viewBox="0 0 9 8"><circle cx="4.5" cy="1.8" r="1.75" fill="#a8a8a8"/><circle cx="1.8" cy="6.2" r="1.75" fill="#a8a8a8"/><circle cx="7.2" cy="6.2" r="1.75" fill="#a8a8a8"/></svg>
  <div class="t" style="left:501.20px;width:100px;text-align:right;top:192.95px;color:#c8c8c8;font-size:8.4px;">0</div>
  <svg style="left:610.90px;top:193.96px" width="10.2" height="10.2" viewBox="0 0 10.2 10.2"><circle cx="5.1" cy="5.1" r="4.05" fill="none" stroke="#3aa46e" stroke-width="1.8"/></svg>
  <div class="t" style="left:623.50px;top:192.95px;color:#d6d6d6;font-size:8.4px;letter-spacing:-.3px">100%</div>
  <div class="t" style="left:71.60px;width:100px;text-align:right;top:212.44px;color:#c8c8c8;font-size:8.4px;">6</div>
  <svg style="left:185.20px;top:214.15px" width="8.4" height="8.4" viewBox="0 0 24 24"><path d="M12 1.5l3.2 6.9 7.5.9-5.6 5.1 1.5 7.4L12 18.1l-6.6 3.7 1.5-7.4L1.3 9.3l7.5-.9z" fill="#a2a2a2"/></svg>
  <div class="t" style="left:197.40px;top:212.44px;color:#d6d6d6;font-size:8.4px;letter-spacing:0px">Redesign the logo</div>
  <div class="t" style="left:397.60px;top:212.44px;color:#d6d6d6;font-size:8.4px;">Task</div>
  <div class="t" style="left:439.80px;top:212.44px;color:#d6d6d6;font-size:8.4px;">Tony Stark</div>
  <svg style="left:531.30px;top:213.95px" width="9" height="8" viewBox="0 0 9 8"><circle cx="4.5" cy="1.8" r="1.75" fill="#a8a8a8"/><circle cx="1.8" cy="6.2" r="1.75" fill="#a8a8a8"/><circle cx="7.2" cy="6.2" r="1.75" fill="#a8a8a8"/></svg>
  <div class="t" style="left:501.20px;width:100px;text-align:right;top:212.44px;color:#c8c8c8;font-size:8.4px;">-1</div>
  <svg style="left:610.90px;top:213.45px" width="10.2" height="10.2" viewBox="0 0 10.2 10.2"><circle cx="5.1" cy="5.1" r="4.05" fill="none" stroke="#3aa46e" stroke-width="1.8"/></svg>
  <div class="t" style="left:623.50px;top:212.44px;color:#d6d6d6;font-size:8.4px;letter-spacing:-.3px">100%</div>
  <div class="t" style="left:71.60px;width:100px;text-align:right;top:231.93px;color:#c8c8c8;font-size:8.4px;">7</div>
  <div class="t" style="left:186.50px;top:231.93px;color:#d6d6d6;font-size:8.4px;letter-spacing:0.06px">Search for new opportunities to get backlinks</div>
  <div class="t" style="left:397.60px;top:231.93px;color:#d6d6d6;font-size:8.4px;">Story</div>
  <div class="t" style="left:439.80px;top:231.93px;color:#d6d6d6;font-size:8.4px;">Tony Stark</div>
  <svg style="left:531.30px;top:233.44px" width="9" height="8" viewBox="0 0 9 8"><circle cx="4.5" cy="1.8" r="1.75" fill="#a8a8a8"/><circle cx="1.8" cy="6.2" r="1.75" fill="#a8a8a8"/><circle cx="7.2" cy="6.2" r="1.75" fill="#a8a8a8"/></svg>
  <div class="t" style="left:501.20px;width:100px;text-align:right;top:231.93px;color:#c8c8c8;font-size:8.4px;">-1</div>
  <svg style="left:610.90px;top:232.94px" width="10.2" height="10.2" viewBox="0 0 10.2 10.2"><circle cx="5.1" cy="5.1" r="4.05" fill="none" stroke="#3aa46e" stroke-width="1.8"/></svg>
  <div class="t" style="left:623.50px;top:231.93px;color:#d6d6d6;font-size:8.4px;letter-spacing:-.3px">100%</div>
  <div class="t" style="left:71.60px;width:100px;text-align:right;top:251.42px;color:#c8c8c8;font-size:8.4px;">8</div>
  <div class="t" style="left:186.50px;top:251.42px;color:#d6d6d6;font-size:8.4px;letter-spacing:0.07px">Add scrolling within the grids</div>
  <div class="t" style="left:397.60px;top:251.42px;color:#d6d6d6;font-size:8.4px;">Bug</div>
  <div class="t" style="left:439.80px;top:251.42px;color:#d6d6d6;font-size:8.4px;">Tony Stark</div>
  <svg style="left:531.30px;top:252.93px" width="9" height="8" viewBox="0 0 9 8"><circle cx="4.5" cy="1.8" r="1.75" fill="#a8a8a8"/><circle cx="1.8" cy="6.2" r="1.75" fill="#a8a8a8"/><circle cx="7.2" cy="6.2" r="1.75" fill="#a8a8a8"/></svg>
  <div class="t" style="left:501.20px;width:100px;text-align:right;top:251.42px;color:#c8c8c8;font-size:8.4px;">-1</div>
  <svg style="left:610.90px;top:252.43px" width="10.2" height="10.2" viewBox="0 0 10.2 10.2"><circle cx="5.1" cy="5.1" r="4.05" fill="none" stroke="#3aa46e" stroke-width="1.8"/></svg>
  <div class="t" style="left:623.50px;top:251.42px;color:#d6d6d6;font-size:8.4px;letter-spacing:-.3px">100%</div>
  <div class="t" style="left:71.60px;width:100px;text-align:right;top:270.91px;color:#c8c8c8;font-size:8.4px;">9</div>
  <div class="t" style="left:186.50px;top:270.91px;color:#d6d6d6;font-size:8.4px;letter-spacing:0.04px">Do not display as the nearest event the one without...</div>
  <div class="t" style="left:397.60px;top:270.91px;color:#d6d6d6;font-size:8.4px;">Story</div>
  <div class="t" style="left:439.80px;top:270.91px;color:#d6d6d6;font-size:8.4px;">Tony Stark</div>
  <svg style="left:531.30px;top:272.42px" width="9" height="8" viewBox="0 0 9 8"><circle cx="4.5" cy="1.8" r="1.75" fill="#a8a8a8"/><circle cx="1.8" cy="6.2" r="1.75" fill="#a8a8a8"/><circle cx="7.2" cy="6.2" r="1.75" fill="#a8a8a8"/></svg>
  <div class="t" style="left:501.20px;width:100px;text-align:right;top:270.91px;color:#c8c8c8;font-size:8.4px;">-1</div>
  <svg style="left:610.90px;top:271.92px" width="10.2" height="10.2" viewBox="0 0 10.2 10.2"><circle cx="5.1" cy="5.1" r="4.05" fill="none" stroke="#3aa46e" stroke-width="1.8"/></svg>
  <div class="t" style="left:623.50px;top:270.91px;color:#d6d6d6;font-size:8.4px;letter-spacing:-.3px">100%</div>
  <div class="t" style="left:71.60px;width:100px;text-align:right;top:290.40px;color:#c8c8c8;font-size:8.4px;">10</div>
  <div class="t" style="left:186.50px;top:290.40px;color:#d6d6d6;font-size:8.4px;letter-spacing:0.04px">Move custom audiences refresh to the updater</div>
  <div class="t" style="left:397.60px;top:290.40px;color:#d6d6d6;font-size:8.4px;">Story</div>
  <div class="t" style="left:439.80px;top:290.40px;color:#d6d6d6;font-size:8.4px;">Tony Stark</div>
  <svg style="left:531.30px;top:291.91px" width="9" height="8" viewBox="0 0 9 8"><circle cx="4.5" cy="1.8" r="1.75" fill="#a8a8a8"/><circle cx="1.8" cy="6.2" r="1.75" fill="#a8a8a8"/><circle cx="7.2" cy="6.2" r="1.75" fill="#a8a8a8"/></svg>
  <div class="t" style="left:501.20px;width:100px;text-align:right;top:290.40px;color:#c8c8c8;font-size:8.4px;">-1</div>
  <svg style="left:610.90px;top:291.41px" width="10.2" height="10.2" viewBox="0 0 10.2 10.2"><circle cx="5.1" cy="5.1" r="4.05" fill="none" stroke="#3aa46e" stroke-width="1.8"/></svg>
  <div class="t" style="left:623.50px;top:290.40px;color:#d6d6d6;font-size:8.4px;letter-spacing:-.3px">100%</div>
  <div class="t" style="left:71.60px;width:100px;text-align:right;top:309.89px;color:#c8c8c8;font-size:8.4px;">11</div>
  <div class="a tagbox" style="left:183.10px;top:308.90px;height:14px;border:1px solid #343434;border-radius:3px;padding:0 2.6px 0 3px;font-size:8.4px;line-height:12px;color:transparent;white-space:nowrap;letter-spacing:-0.12px">Push to Asana</div>
  <div class="t" style="left:186.50px;top:309.89px;color:#d6d6d6;font-size:8.4px;letter-spacing:-0.12px">Push to Asana</div>
  <div class="t" style="left:439.80px;top:309.89px;color:#d6d6d6;font-size:8.4px;">Tony Stark</div>
  <svg style="left:515.80px;top:314.10px" width="5" height="3" viewBox="0 0 5 3"><path d="M.4 .4 2.5 2.5 4.6 .4" fill="none" stroke="#8a8a8a" stroke-width=".9"/></svg>
  <div class="a" style="left:532.00px;top:311.70px;width:8.20px;height:8.20px;border-radius:2.2px;background:#a8a8a8"></div>
  <svg style="left:532.00px;top:311.70px" width="8.2" height="8.2" viewBox="0 0 8.2 8.2"><path d="M5.4 1.6v4.9" stroke="#2a2a2a" stroke-width=".9"/><circle cx="3.9" cy="4.9" r="1.45" fill="none" stroke="#2a2a2a" stroke-width=".9"/></svg>
  <div class="t" style="left:501.20px;width:100px;text-align:right;top:309.89px;color:#c8c8c8;font-size:8.4px;">-1</div>
  <svg style="left:610.90px;top:310.90px" width="10.2" height="10.2" viewBox="0 0 10.2 10.2"><circle cx="5.1" cy="5.1" r="4.05" fill="none" stroke="#3aa46e" stroke-width="1.8"/></svg>
  <div class="t" style="left:623.50px;top:309.89px;color:#d6d6d6;font-size:8.4px;letter-spacing:-.3px">100%</div>
  <div class="t" style="left:71.60px;width:100px;text-align:right;top:329.38px;color:#c8c8c8;font-size:8.4px;">12</div>
  <div class="a tagbox" style="left:183.10px;top:328.39px;height:14px;border:1px solid #343434;border-radius:3px;padding:0 2.6px 0 3px;font-size:8.4px;line-height:12px;color:transparent;white-space:nowrap;letter-spacing:0px">Developers meeting</div>
  <div class="t" style="left:186.50px;top:329.38px;color:#d6d6d6;font-size:8.4px;letter-spacing:0px">Developers meeting</div>
  <div class="t" style="left:439.80px;top:329.38px;color:#d6d6d6;font-size:8.4px;">Tony Stark</div>
  <svg style="left:515.80px;top:333.59px" width="5" height="3" viewBox="0 0 5 3"><path d="M.4 .4 2.5 2.5 4.6 .4" fill="none" stroke="#8a8a8a" stroke-width=".9"/></svg>
  <div class="a" style="left:532.00px;top:331.19px;width:8.20px;height:8.20px;border-radius:2.2px;background:#a8a8a8"></div>
  <svg style="left:532.00px;top:331.19px" width="8.2" height="8.2" viewBox="0 0 8.2 8.2"><path d="M5.4 1.6v4.9" stroke="#2a2a2a" stroke-width=".9"/><circle cx="3.9" cy="4.9" r="1.45" fill="none" stroke="#2a2a2a" stroke-width=".9"/></svg>
  <div class="t" style="left:501.20px;width:100px;text-align:right;top:329.38px;color:#c8c8c8;font-size:8.4px;">-1</div>
  <svg style="left:610.90px;top:330.39px" width="10.2" height="10.2" viewBox="0 0 10.2 10.2"><circle cx="5.1" cy="5.1" r="4.05" fill="none" stroke="#3aa46e" stroke-width="1.8"/></svg>
  <div class="t" style="left:623.50px;top:329.38px;color:#d6d6d6;font-size:8.4px;letter-spacing:-.3px">100%</div>
  <svg style="left:158.40px;top:350.90px" width="8.3" height="8" viewBox="0 0 8.3 8"><path d="M4.15 0v8M0 4h8.3" stroke="#555" stroke-width=".9"/></svg>
  <div class="t" style="left:169.30px;top:348.89px;color:#5a5a5a;font-size:8.4px;">New issue</div>
<!--/MAIN-->
  <div class="rpanel"></div>
<!--RP-->
  <div class="t" style="left:856.20px;top:101.03px;color:#3e3e3e;font-size:8.0px;">Status</div>
  <div class="a" style="left:855.80px;top:116.90px;width:40.00px;height:14.60px;border:1px solid #262626;border-radius:3px"></div>
  <div class="a" style="left:861.60px;top:123.70px;width:2.00px;height:2.00px;border-radius:50%;background:#444"></div>
  <div class="t" style="left:869.00px;top:118.29px;color:#3e3e3e;font-size:8.4px;">To do</div>
  <div class="a" style="left:856.50px;top:145.40px;width:40.00px;height:20.80px;border:1px solid #242424;border-radius:3px"></div>
  <div class="t" style="left:861.40px;top:150.38px;color:#4a4a4a;font-size:14.5px;font-weight:700">New</div>
  <div class="a" style="left:856.50px;top:178.70px;width:40.00px;height:17.00px;border:1px solid #242424;border-radius:3px"></div>
  <div class="t" style="left:863.50px;top:180.38px;color:#3e3e3e;font-size:9px;"># 1</div>
  <div class="a" style="left:856.50px;top:206.60px;width:40.00px;height:14.60px;border-radius:3px;background:#1d1d1d"></div>
  <svg style="left:862.00px;top:210.50px" width="6.5" height="6.5" viewBox="0 0 6.5 6.5"><path d="M3.25 0v6.5M0 3.25h6.5" stroke="#3a3a3a" stroke-width=".9"/></svg>
  <div class="t" style="left:871.00px;top:208.09px;color:#3e3e3e;font-size:8.4px;">Add</div>
  <div class="a" style="left:856.50px;top:231.00px;width:40.00px;height:24.20px;border:1px solid #222;border-radius:3px"></div>
  <div class="t" style="left:863.00px;top:235.99px;color:#3e3e3e;font-size:8.4px;">The</div>
  <div class="t" style="left:856.10px;top:269.89px;color:#343434;font-size:8.4px;">Created</div>
  <div class="t" style="left:856.10px;top:286.89px;color:#343434;font-size:8.4px;">2 hours</div>
<!--/RP-->
<!--CHAT-->
  <div class="a" style="left:824.90px;top:449.70px;width:37.00px;height:37.00px;border-radius:50%;background:#2176ee"></div>
  <svg style="left:833.80px;top:461.30px" width="17.5" height="15" viewBox="0 0 17.5 15"><path d="M.3 1.4 17.2.2v12.4H11.6l-2 2.2-2-2.2H.3z" fill="#eceef2" stroke="#eceef2" stroke-width=".5" stroke-linejoin="round"/></svg>
<!--/CHAT-->
</div>
</body></html>
